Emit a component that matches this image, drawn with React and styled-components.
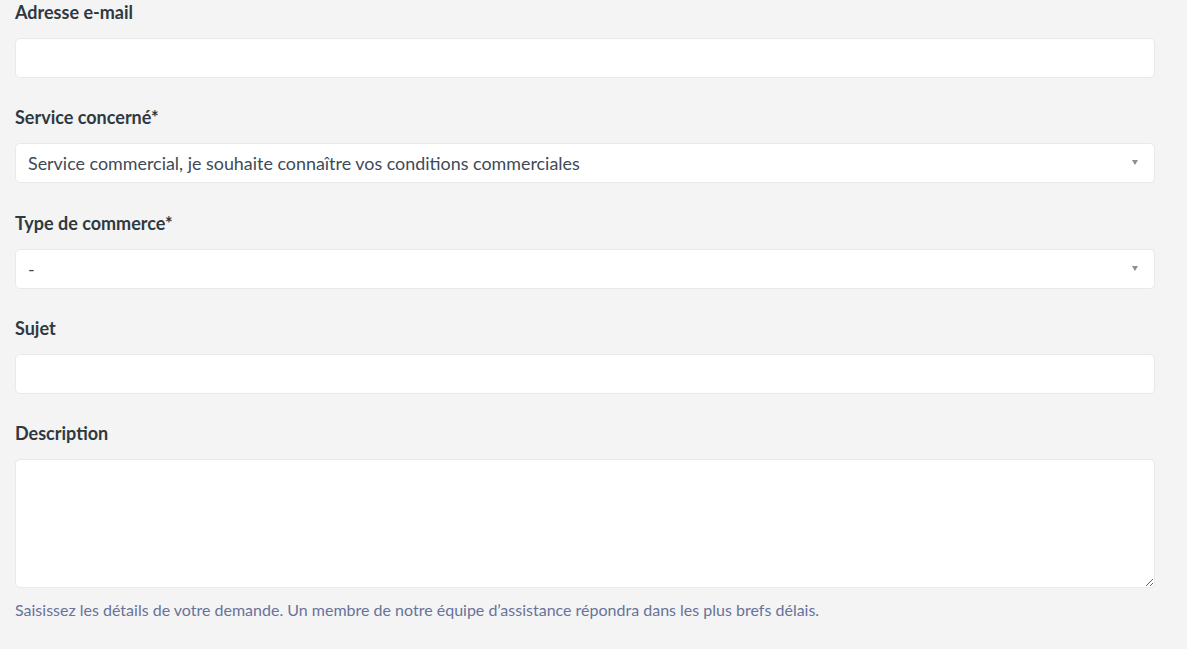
import React from "react";
import styled, { createGlobalStyle } from "styled-components";

const GlobalStyle = createGlobalStyle`
  body {
    margin: 0;
    background: #f4f4f4;
    font-family: Lato, "Open Sans", sans-serif;
  }
`;

const Form = styled.form`
  width: 1140px;
  margin-left: 15px;
  display: flex;
  flex-direction: column;
`;

const Field = styled.div`
  display: flex;
  flex-direction: column;
  margin-bottom: ${(p) => (p.$last ? 0 : 27.25)}px;
`;

const Label = styled.label`
  font-size: 18px;
  font-weight: 700;
  line-height: 24px;
  color: #2f3941;
  margin-bottom: 14px;
`;

const Box = styled.div`
  position: relative;
  box-sizing: border-box;
  height: 40px;
  background: #fff;
  border: 1px solid #e9e9e9;
  border-radius: 5px;
  display: flex;
  align-items: center;
  padding: 0 12px;
  font-size: 17.9px;
  color: #3e4a57;
`;

const Input = styled.input`
  box-sizing: border-box;
  height: 40px;
  background: #fff;
  border: 1px solid #e9e9e9;
  border-radius: 5px;
  padding: 0 12px;
  font: 18px Lato, sans-serif;
  outline: none;
`;

const TextArea = styled.textarea`
  box-sizing: border-box;
  height: 129px;
  background: #fff;
  border: 1px solid #e9e9e9;
  border-radius: 5px;
  padding: 8px 12px;
  font: 18px Lato, sans-serif;
  resize: vertical;
  outline: none;
`;

const Arrow = styled.span`
  position: absolute;
  right: 16px;
  top: 16px;
  width: 0;
  height: 0;
  border-left: 3px solid transparent;
  border-right: 3px solid transparent;
  border-top: 5px solid #8a8f98;
`;

const Hint = styled.p`
  margin: 11px 0 0;
  font-size: 16px;
  line-height: 22px;
  color: #68729a;
`;

const Select = ({ value }) => (
  <Box>
    {value}
    <Arrow />
  </Box>
);

export default function App() {
  return (
    <>
      <GlobalStyle />
      <Form>
        <Field>
          <Label>Adresse e-mail</Label>
          <Input type="email" />
        </Field>
        <Field>
          <Label>Service concerné*</Label>
          <Select value="Service commercial, je souhaite connaître vos conditions commerciales" />
        </Field>
        <Field>
          <Label>Type de commerce*</Label>
          <Select value="-" />
        </Field>
        <Field>
          <Label>Sujet</Label>
          <Input type="text" />
        </Field>
        <Field $last>
          <Label>Description</Label>
          <TextArea />
          <Hint>
            Saisissez les détails de votre demande. Un membre de notre équipe d’assistance répondra dans les plus brefs délais.
          </Hint>
        </Field>
      </Form>
    </>
  );
}
